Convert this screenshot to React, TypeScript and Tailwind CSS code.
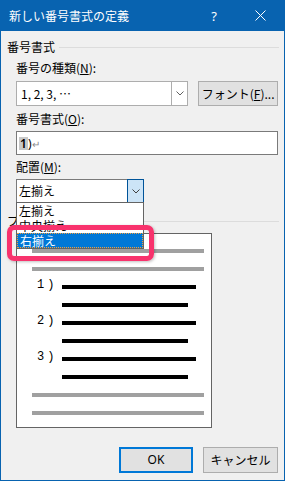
export default function App() {
  const grayLine = <div className="ml-[15px] w-[172px] h-[4px] bg-[#A0A0A0]" />;
  const blackRow = (num: string | null, long: boolean) => (
    <div className="flex items-center h-[4px] pl-[20px]">
      <span className="w-[25px] shrink-0 mb-[5px] text-[12px] leading-[14px] tracking-[3px] font-['Liberation_Mono','DejaVu_Sans_Mono',monospace]">
        {num ?? ""}
      </span>
      <div className={`${long ? "w-[134px]" : "w-[126px]"} h-[4px] bg-black`} />
    </div>
  );

  return (
    <div className="w-[285px] h-[481px] bg-[#0863B0] flex flex-col px-px pb-px font-['Noto_Sans_CJK_JP','Noto_Sans',sans-serif] text-[12px] text-black">
      {/* Title bar */}
      <div className="h-[31px] shrink-0 flex items-center text-white">
        <span className="ml-[8px] leading-[16px] text-[12px]">新しい番号書式の定義</span>
        <span className="ml-auto leading-[16px] font-['Noto_Sans',sans-serif] text-[13px]">?</span>
        <svg width="11" height="11" viewBox="0 0 11 11" className="ml-[38px] mr-[18px]">
          <path d="M0.5 0.5 L10.5 10.5 M10.5 0.5 L0.5 10.5" stroke="white" strokeWidth="1" />
        </svg>
      </div>

      {/* Body */}
      <div className="flex-1 bg-[#F0F0F0] flex flex-col relative">
        {/* group header 番号書式 */}
        <div className="mt-[8px] h-[16px] flex items-center pl-[6px] pr-[5px]">
          <span className="leading-[16px]">番号書式</span>
          <div className="flex-1 h-px bg-[#DCDCDC] ml-[4px]" />
        </div>

        <div className="mt-[5px] h-[16px] pl-[15px] leading-[16px]">
          番号の種類(<span className="underline">N</span>):
        </div>

        <div className="mt-[5px] h-[25px] flex pl-[15px] pr-[6px] gap-[10px]">
          <div className="w-[173px] h-[25px] bg-white border border-[#ADADAD] flex">
            <div className="flex-1 flex items-center pl-[4px] text-[12px]">
              1, 2, 3, …
            </div>
            <div className="w-[16px] border-l border-[#ADADAD] flex items-center justify-center">
              <svg width="8" height="5" viewBox="0 0 8 5">
                <path d="M0.5 0.5 L4 4 L7.5 0.5" stroke="#606060" strokeWidth="1" fill="none" />
              </svg>
            </div>
          </div>
          <div className="w-[80px] h-[25px] bg-[#E1E1E1] border border-[#ADADAD] flex items-center justify-center leading-[16px]">
            フォント(<span className="underline">F</span>)...
          </div>
        </div>

        <div className="mt-[5px] h-[16px] pl-[15px] leading-[16px]">
          番号書式(<span className="underline">O</span>):
        </div>

        <div className="mt-[4px] ml-[15px] mr-[6px] h-[24px] bg-white border border-[#7A7A7A] flex items-center pl-[2px]">
          <span className="bg-[#C8C8C8] px-px leading-[13px] font-semibold font-['Noto_Sans',sans-serif] text-[12px]">1</span>
          <span className="leading-[13px] font-['Noto_Sans',sans-serif] text-[12px]">)</span>
          <span className="leading-[13px] text-[10px] text-[#8A8A8A] ml-px">↵</span>
        </div>

        <div className="mt-[4px] h-[16px] pl-[15px] leading-[16px]">
          配置(<span className="underline">M</span>):
        </div>

        <div className="mt-[4px] ml-[15px] w-[128px] h-[24px] bg-white border border-[#7A7A7A] flex">
          <div className="flex-1 flex items-center pl-[2px] leading-[16px]">左揃え</div>
          <div className="w-[17px] -my-px -mr-px bg-[#CCE4F7] border border-[#005499] flex items-center justify-center">
            <svg width="8" height="5" viewBox="0 0 8 5">
              <path d="M0.5 0.5 L4 4 L7.5 0.5" stroke="#404040" strokeWidth="1" fill="none" />
            </svg>
          </div>
        </div>

        {/* preview group header */}
        <div className="mt-[10px] h-[16px] flex items-center pl-[6px] pr-[5px]">
          <span className="leading-[16px]">プレビュー</span>
          <div className="flex-1 h-px bg-[#DCDCDC] ml-[4px]" />
        </div>

        {/* preview box */}
        <div className="mt-[4px] ml-[15px] w-[196px] h-[195px] bg-white border border-[#646464] flex flex-col gap-[14px] pt-[15px]">
          {grayLine}
          {grayLine}
          {blackRow("1)", true)}
          {blackRow(null, false)}
          {blackRow("2)", true)}
          {blackRow(null, false)}
          {blackRow("3)", true)}
          {blackRow(null, false)}
          {grayLine}
          {grayLine}
        </div>

        {/* buttons */}
        <div className="mt-[19px] flex justify-end gap-[10px] pr-[6px]">
          <div className="w-[74px] h-[26px] bg-[#E1E1E1] border-2 border-[#0078D7] flex items-center justify-center font-['Noto_Sans',sans-serif] leading-[16px]">
            OK
          </div>
          <div className="w-[75px] h-[26px] bg-[#E1E1E1] border border-[#ADADAD] flex items-center justify-center leading-[16px]">
            キャンセル
          </div>
        </div>

        {/* dropdown list overlay */}
        <div className="absolute left-[15px] top-[171px] w-[128px] h-[47px] bg-white border border-[#646464] flex flex-col">
          <div className="h-[15px] pl-[2px] leading-[15px]">左揃え</div>
          <div className="h-[15px] pl-[2px] leading-[15px]">中央揃え</div>
          <div className="h-[15px] pl-[2px] leading-[14px] bg-[#0078D7] text-white border border-dotted border-[#F0A040]">
            右揃え
          </div>
        </div>

        {/* pink highlight ring */}
        <div className="absolute left-[6px] top-[194px] w-[147px] h-[36px] rounded-[7px] border-[5px] border-[#F8336D] shadow-[1px_1px_3px_rgba(0,0,0,0.25)]" />
      </div>
    </div>
  );
}
